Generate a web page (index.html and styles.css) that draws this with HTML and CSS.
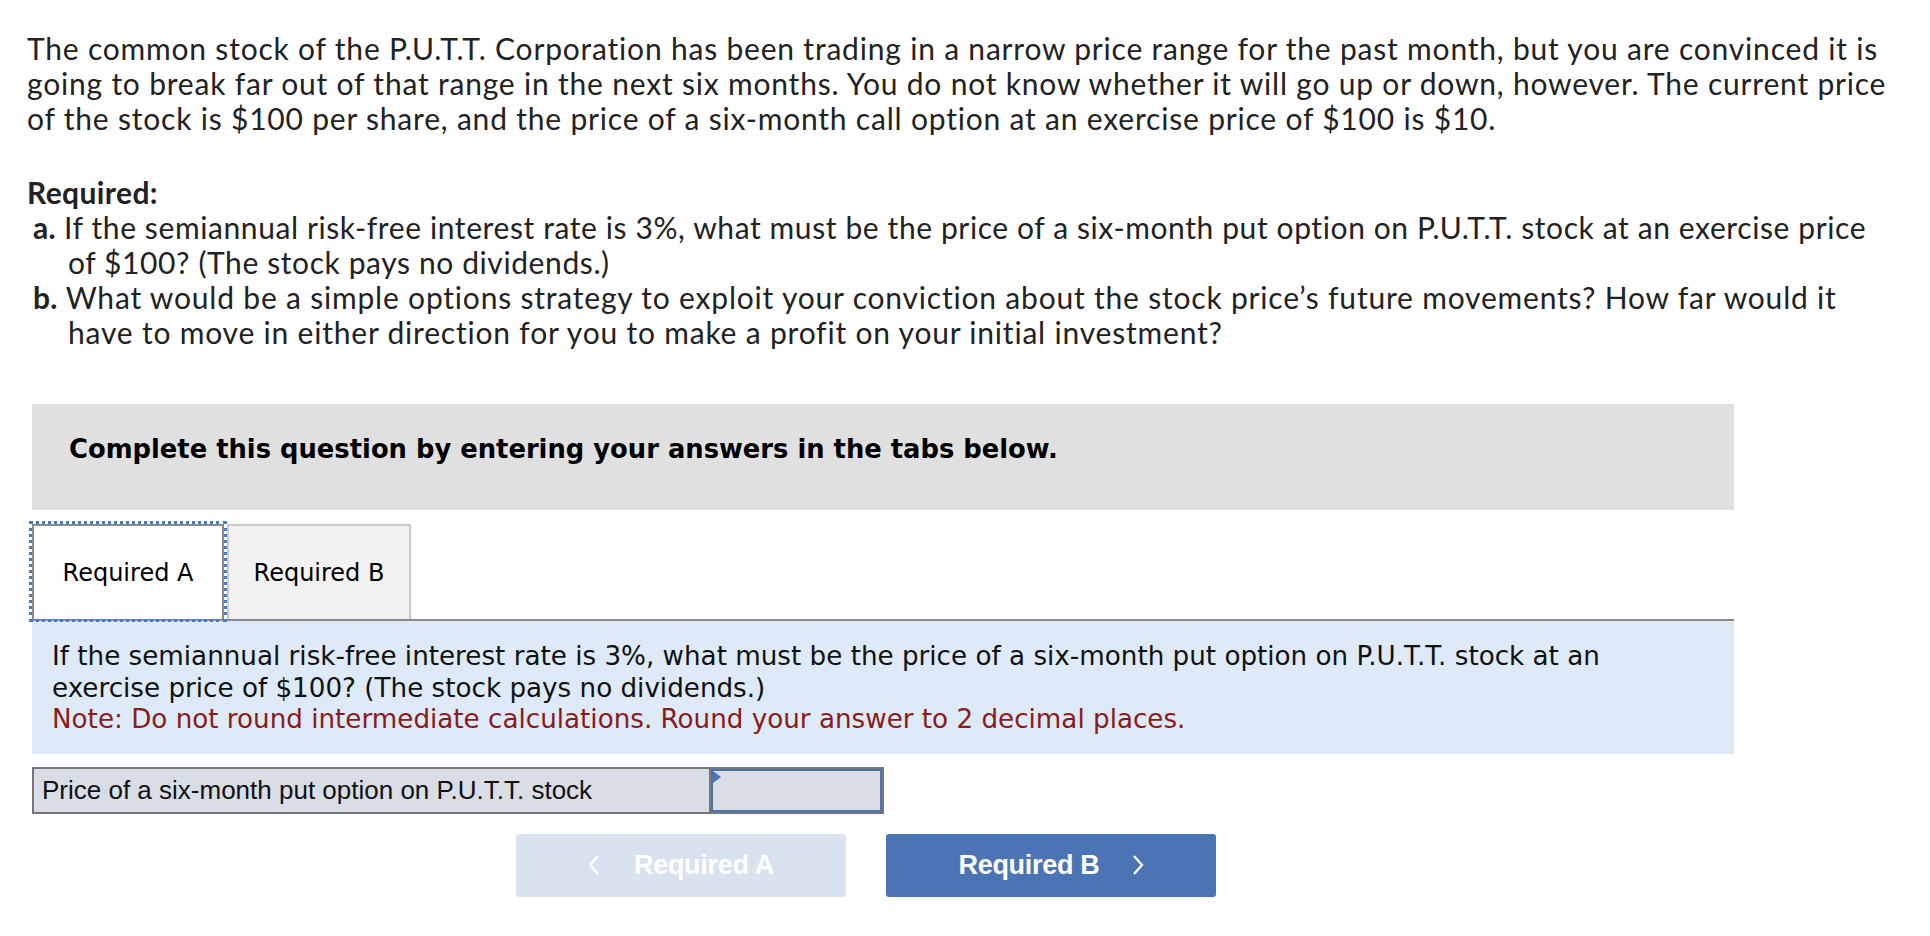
FILE: index.html
```html
<!DOCTYPE html>
<html>
<head>
<meta charset="utf-8">
<link rel="stylesheet" href="styles.css">
</head>
<body>
<div class="page">
  <p class="intro">The common stock of the P.U.T.T. Corporation has been trading in a narrow price range for the past month, but you are convinced it is going to break far out of that range in the next six months. You do not know whether it will go up or down, however. The current price of the stock is $100 per share, and the price of a six-month call option at an exercise price of $100 is $10.</p>
  <h3 class="req-title">Required:</h3>
  <ul class="req-list">
    <li class="req-a"><b>a.</b> If the semiannual risk-free interest rate is 3%, what must be the price of a six-month put option on P.U.T.T. stock at an exercise price of $100? (The stock pays no dividends.)</li>
    <li class="req-b"><b>b.</b> What would be a simple options strategy to exploit your conviction about the stock price’s future movements? How far would it have to move in either direction for you to make a profit on your initial investment?</li>
  </ul>

  <div class="instructions">Complete this question by entering your answers in the tabs below.</div>

  <div class="tabs">
    <div class="tab active">Required A</div>
    <div class="tab">Required B</div>
  </div>

  <div class="prompt">
    <p>If the semiannual risk-free interest rate is 3%, what must be the price of a six-month put option on P.U.T.T. stock at an exercise price of $100? (The stock pays no dividends.)</p>
    <p class="note">Note: Do not round intermediate calculations. Round your answer to 2 decimal places.</p>
  </div>

  <div class="answer-row">
    <div class="answer-label">Price of a six-month put option on P.U.T.T. stock</div>
    <div class="answer-input"></div>
  </div>

  <div class="nav">
    <div class="btn btn-prev"><svg class="chev chev-left" width="12" height="22" viewBox="0 0 12 22"><polyline points="10,2 2,11 10,20" fill="none" stroke="#ffffff" stroke-width="2.2"/></svg>Required A</div>
    <div class="btn btn-next">Required B<svg class="chev chev-right" width="12" height="22" viewBox="0 0 12 22"><polyline points="2,2 10,11 2,20" fill="none" stroke="#ffffff" stroke-width="2.2"/></svg></div>
  </div>
</div>
</body>
</html>
```

FILE: styles.css
```css
html, body {
  margin: 0;
  padding: 0;
  background: #ffffff;
}

.page {
  padding: 31px 0 0 27px;
  width: 1866px;
  color: #222;
}

.intro {
  margin: 0;
  font-family: "Lato", "Open Sans", sans-serif;
  font-size: 30px;
  letter-spacing: 0.8px;
  line-height: 35px;
  color: #222;
}

.req-title {
  margin: 39px 0 0 0;
  font-family: "Lato", sans-serif;
  font-weight: 700;
  font-size: 30px;
  letter-spacing: 0.4px;
  line-height: 35px;
  color: #222;
}

.req-list {
  list-style: none;
  margin: 0;
  padding: 0 0 0 41px;
  font-family: "Lato", sans-serif;
  font-size: 30px;
  letter-spacing: 0.8px;
  line-height: 35px;
}

.req-list li {
  text-indent: -35px;
}

.req-list .req-a {
  letter-spacing: 0.6px;
}

.req-list b {
  font-weight: 700;
  letter-spacing: 0.2px;
}

.instructions {
  margin: 54px 0 0 5px;
  width: 1702px;
  box-sizing: border-box;
  background: #e0e0e0;
  padding: 31px 37px 46px 37px;
  font-family: "DejaVu Sans", Verdana, sans-serif;
  font-weight: 700;
  font-size: 25.8px;
  line-height: 29px;
  color: #000;
}

.tabs {
  margin: 14px 0 0 5px;
  width: 1702px;
  display: flex;
  align-items: flex-end;
  border-bottom: 2px solid #8a8a8a;
  gap: 3px;
}

.tab {
  box-sizing: border-box;
  height: 95px;
  display: flex;
  align-items: center;
  justify-content: center;
  font-family: "DejaVu Sans", Verdana, sans-serif;
  font-size: 24px;
  color: #000;
}

.tab.active {
  width: 192px;
  background: #fff;
  border: 2px solid #8a8a8a;
  border-bottom: none;
  outline: 3px dotted #4a7ac4;
  outline-offset: 0;
}

.tab:not(.active) {
  width: 184px;
  background: #f2f2f2;
  border: 2px solid #c8c8c8;
  border-bottom: none;
}

.prompt {
  margin: 0 0 0 5px;
  width: 1702px;
  box-sizing: border-box;
  background: #deeaf7;
  padding: 20px 20px 18px 20px;
  font-family: "DejaVu Sans", Verdana, sans-serif;
  font-size: 26.2px;
  line-height: 31.5px;
  color: #111;
}

.prompt p {
  margin: 0;
}

.prompt .note {
  color: #8b1a1a;
}

.answer-row {
  margin: 13px 0 0 5px;
  display: flex;
  height: 47px;
}

.answer-label {
  box-sizing: border-box;
  width: 677px;
  height: 47px;
  background: #d8dde6;
  border: 2px solid #777;
  border-right: none;
  padding: 0 8px;
  display: flex;
  align-items: center;
  font-family: "Liberation Sans", Arial, sans-serif;
  font-size: 26px;
  color: #111;
}

.answer-input {
  position: relative;
  box-sizing: border-box;
  width: 175px;
  height: 47px;
  background: #d8dde6;
  border: 2px solid #777;
  box-shadow: inset 0 0 0 2px #4a74b3;
}

.answer-input::before {
  content: "";
  position: absolute;
  left: 2px;
  top: 2px;
  width: 0;
  height: 0;
  border-top: 6px solid transparent;
  border-bottom: 6px solid transparent;
  border-left: 8px solid #4a74b3;
}

.nav {
  margin: 20px 0 0 489px;
  display: flex;
  gap: 40px;
}

.btn {
  box-sizing: border-box;
  width: 330px;
  height: 63px;
  border-radius: 3px;
  display: flex;
  align-items: center;
  justify-content: center;
  font-family: "Liberation Sans", Arial, sans-serif;
  font-weight: 700;
  font-size: 27px;
  letter-spacing: -0.3px;
  color: #fff;
}

.btn-prev {
  background: #d9e2ee;
}

.btn-next {
  background: #4a74b3;
}

.chev {
  display: block;
}

.chev-left {
  margin-right: 34px;
}

.chev-right {
  margin-left: 32px;
}
```
